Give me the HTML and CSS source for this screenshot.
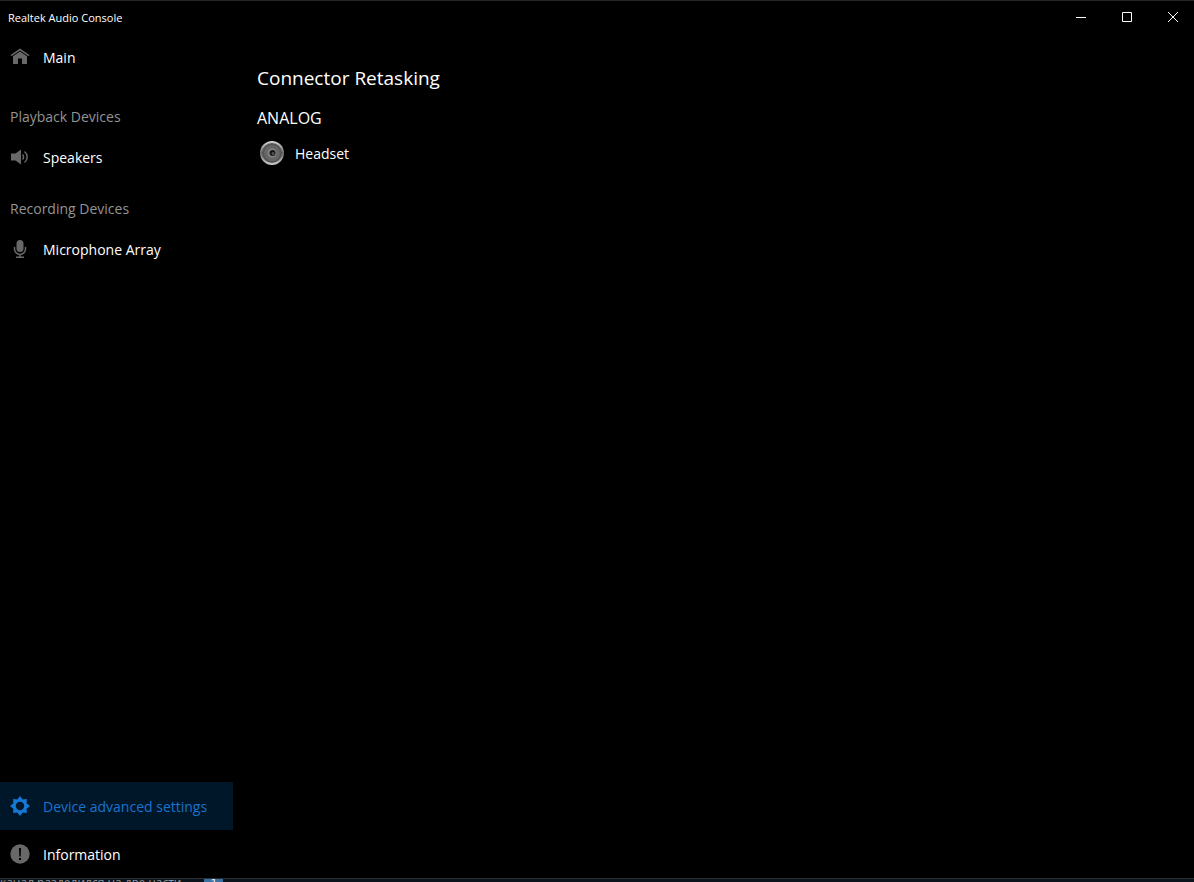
FILE: index.html
```html
<!DOCTYPE html>
<html lang="en">
	<head>
		<meta charset="utf-8">
		<title>Realtek Audio Console</title>
		<link rel="stylesheet" href="styles.css">
	</head>
	<body>
		<header class="title-bar">
			<span class="title-text">Realtek Audio Console</span>
			<div class="window-buttons">
				<button type="button" aria-label="Minimize">
					<svg width="10" height="10" viewBox="0 0 10 10"><path d="M0 5.5h10"/></svg>
				</button>
				<button type="button" aria-label="Maximize">
					<svg width="10" height="10" viewBox="0 0 10 10"><path d="M.5.5h9v9h-9z"/></svg>
				</button>
				<button type="button" aria-label="Close">
					<svg width="10" height="10" viewBox="0 0 10 10"><path d="M0 0l10 10M10 0L0 10"/></svg>
				</button>
			</div>
		</header>

		<div class="console">
			<nav class="sidebar">
				<div class="nav-top">
					<a class="nav-item" href="#main">
						<svg width="20" height="20" viewBox="0 0 20 20">
							<path d="M10 1.500L.6 8l.8 1.200L10 3.400l8.600 5.800.8-1.200z"/>
							<path d="M10 4.500L3 9.200V17h5v-5.500h4V17h5V9.200z"/>
						</svg>
						<span>Main</span>
					</a>
				</div>
				<h2 class="nav-label">Playback Devices</h2>
				<a class="nav-item" href="#speakers">
					<svg width="20" height="20" viewBox="0 0 20 20">
						<path d="M1 6.500h4.500L11 2.500v15l-5.500-4H1z"/>
						<path class="wave" d="M12.500 7.500a3.500 3.500 0 0 1 0 5M14.500 4.500a7 7 0 0 1 0 11"/>
					</svg>
					<span>Speakers</span>
				</a>
				<h2 class="nav-label">Recording Devices</h2>
				<a class="nav-item" href="#microphone">
					<svg width="20" height="20" viewBox="0 0 20 20">
						<rect x="6.500" y="1" width="7" height="12" rx="3.500"/>
						<path class="wave" d="M4.500 8v2a5.500 5.500 0 0 0 11 0V8M10 15.500V18M6 18.200h8"/>
					</svg>
					<span>Microphone Array</span>
				</a>

				<div class="nav-bottom">
					<a class="nav-item selected" href="#advanced">
						<svg width="20" height="20" viewBox="0 0 20 20">
							<path fill-rule="evenodd" d="M10 0l2.700 3.400 4.200-.3-.3 4.200L20 10l-3.400 2.700.3 4.200-4.200-.3L10 20l-2.700-3.400-4.200.3.3-4.200L0 10l3.400-2.700-.3-4.200 4.200.3zM10 5.800a4.200 4.200 0 1 0 0 8.400 4.200 4.200 0 0 0 0-8.400z"/>
						</svg>
						<span>Device advanced settings</span>
					</a>
					<a class="nav-item" href="#information">
						<svg width="20" height="20" viewBox="0 0 20 20">
							<circle cx="10" cy="10" r="9.700"/>
							<path class="mark" d="M9 4h2l-.3 8.500H9.300zM9 14h2v2H9z"/>
						</svg>
						<span>Information</span>
					</a>
				</div>
			</nav>

			<main class="content">
				<h1>Connector Retasking</h1>
				<h2>ANALOG</h2>
				<div class="connector">
					<svg width="24" height="24" viewBox="0 0 24 24">
						<defs>
							<linearGradient id="rim" x1="0" y1="0" x2="0" y2="1">
								<stop offset="0" stop-color="#d8d8d8"/>
								<stop offset=".5" stop-color="#686868"/>
								<stop offset="1" stop-color="#d0d0d0"/>
							</linearGradient>
						</defs>
						<circle cx="12" cy="12" r="12" fill="url(#rim)"/>
						<circle cx="12" cy="12" r="10" fill="#555"/>
						<circle cx="12" cy="12" r="8" fill="#666"/>
						<circle cx="12" cy="12" r="4.500" fill="#858585"/>
						<circle cx="12.500" cy="12" r="3" fill="#161616"/>
						<circle cx="13" cy="12.500" r="1.500" fill="#555"/>
					</svg>
					<span>Headset</span>
				</div>
			</main>
		</div>

		<footer class="behind">
			<span class="behind-text">канал разделился на две части</span>
			<span class="behind-count">1</span>
		</footer>
	</body>
</html>
```

FILE: styles.css
```css
* {
	box-sizing: border-box;
}

body {
	margin: 0;
	height: 100vh;
	display: flex;
	flex-direction: column;
	background: #000;
	color: #fff;
	font-family: "Open Sans", "Noto Sans", sans-serif;
	font-size: 14px;
	overflow: hidden;
}

h1, h2 {
	margin: 0;
	font-weight: normal;
}

.title-bar {
	display: flex;
	justify-content: space-between;
	height: 33px;
	border-top: 1px solid #262626;
	padding-left: 8px;
	line-height: 34px;
	font-size: 11px;
}

.window-buttons {
	display: flex;
	margin-right: -2px;
}

.window-buttons button {
	display: flex;
	align-items: center;
	justify-content: center;
	width: 46px;
	height: 32px;
	padding: 0;
	border: 0;
	background: none;
}

.window-buttons svg {
	fill: none;
	stroke: #fff;
}

.console {
	display: flex;
	flex: 1;
}

.sidebar {
	display: flex;
	flex-direction: column;
	width: 233px;
}

.nav-top {
	margin-bottom: 8px;
}

.nav-item {
	display: flex;
	align-items: center;
	gap: 13px;
	height: 48px;
	padding-left: 10px;
	color: #fff;
	text-decoration: none;
}

.nav-item svg {
	fill: #686868;
}

.nav-item .wave {
	fill: none;
	stroke: #686868;
	stroke-width: 1.5;
}

.nav-item .mark {
	fill: #000;
}

.nav-label {
	padding: 12px 0 0 10px;
	line-height: 32px;
	font-size: 14px;
	color: #949494;
}

.nav-bottom {
	margin-top: auto;
}

.nav-item.selected {
	background: #001629;
	color: #1874cd;
}

.nav-item.selected svg {
	fill: #1478d4;
}

.content {
	flex: 1;
	padding: 29px 24px;
}

.content h1 {
	line-height: 32px;
	font-size: 19px;
}

.content h2 {
	margin-top: 12px;
	line-height: 24px;
	font-size: 16px;
}

.connector {
	display: flex;
	align-items: center;
	gap: 11px;
	margin-top: 11px;
	padding-left: 3px;
}

/* strip of the window underneath */
.behind {
	display: flex;
	gap: 23px;
	height: 4px;
	border-top: 1px solid #2b3036;
	background: #0c131b;
	overflow: hidden;
	line-height: 8px;
	font-size: 12px;
	color: #8f949a;
}

.behind-count {
	width: 19px;
	background: #3b70a3;
	color: #fff;
	text-align: center;
}
```
